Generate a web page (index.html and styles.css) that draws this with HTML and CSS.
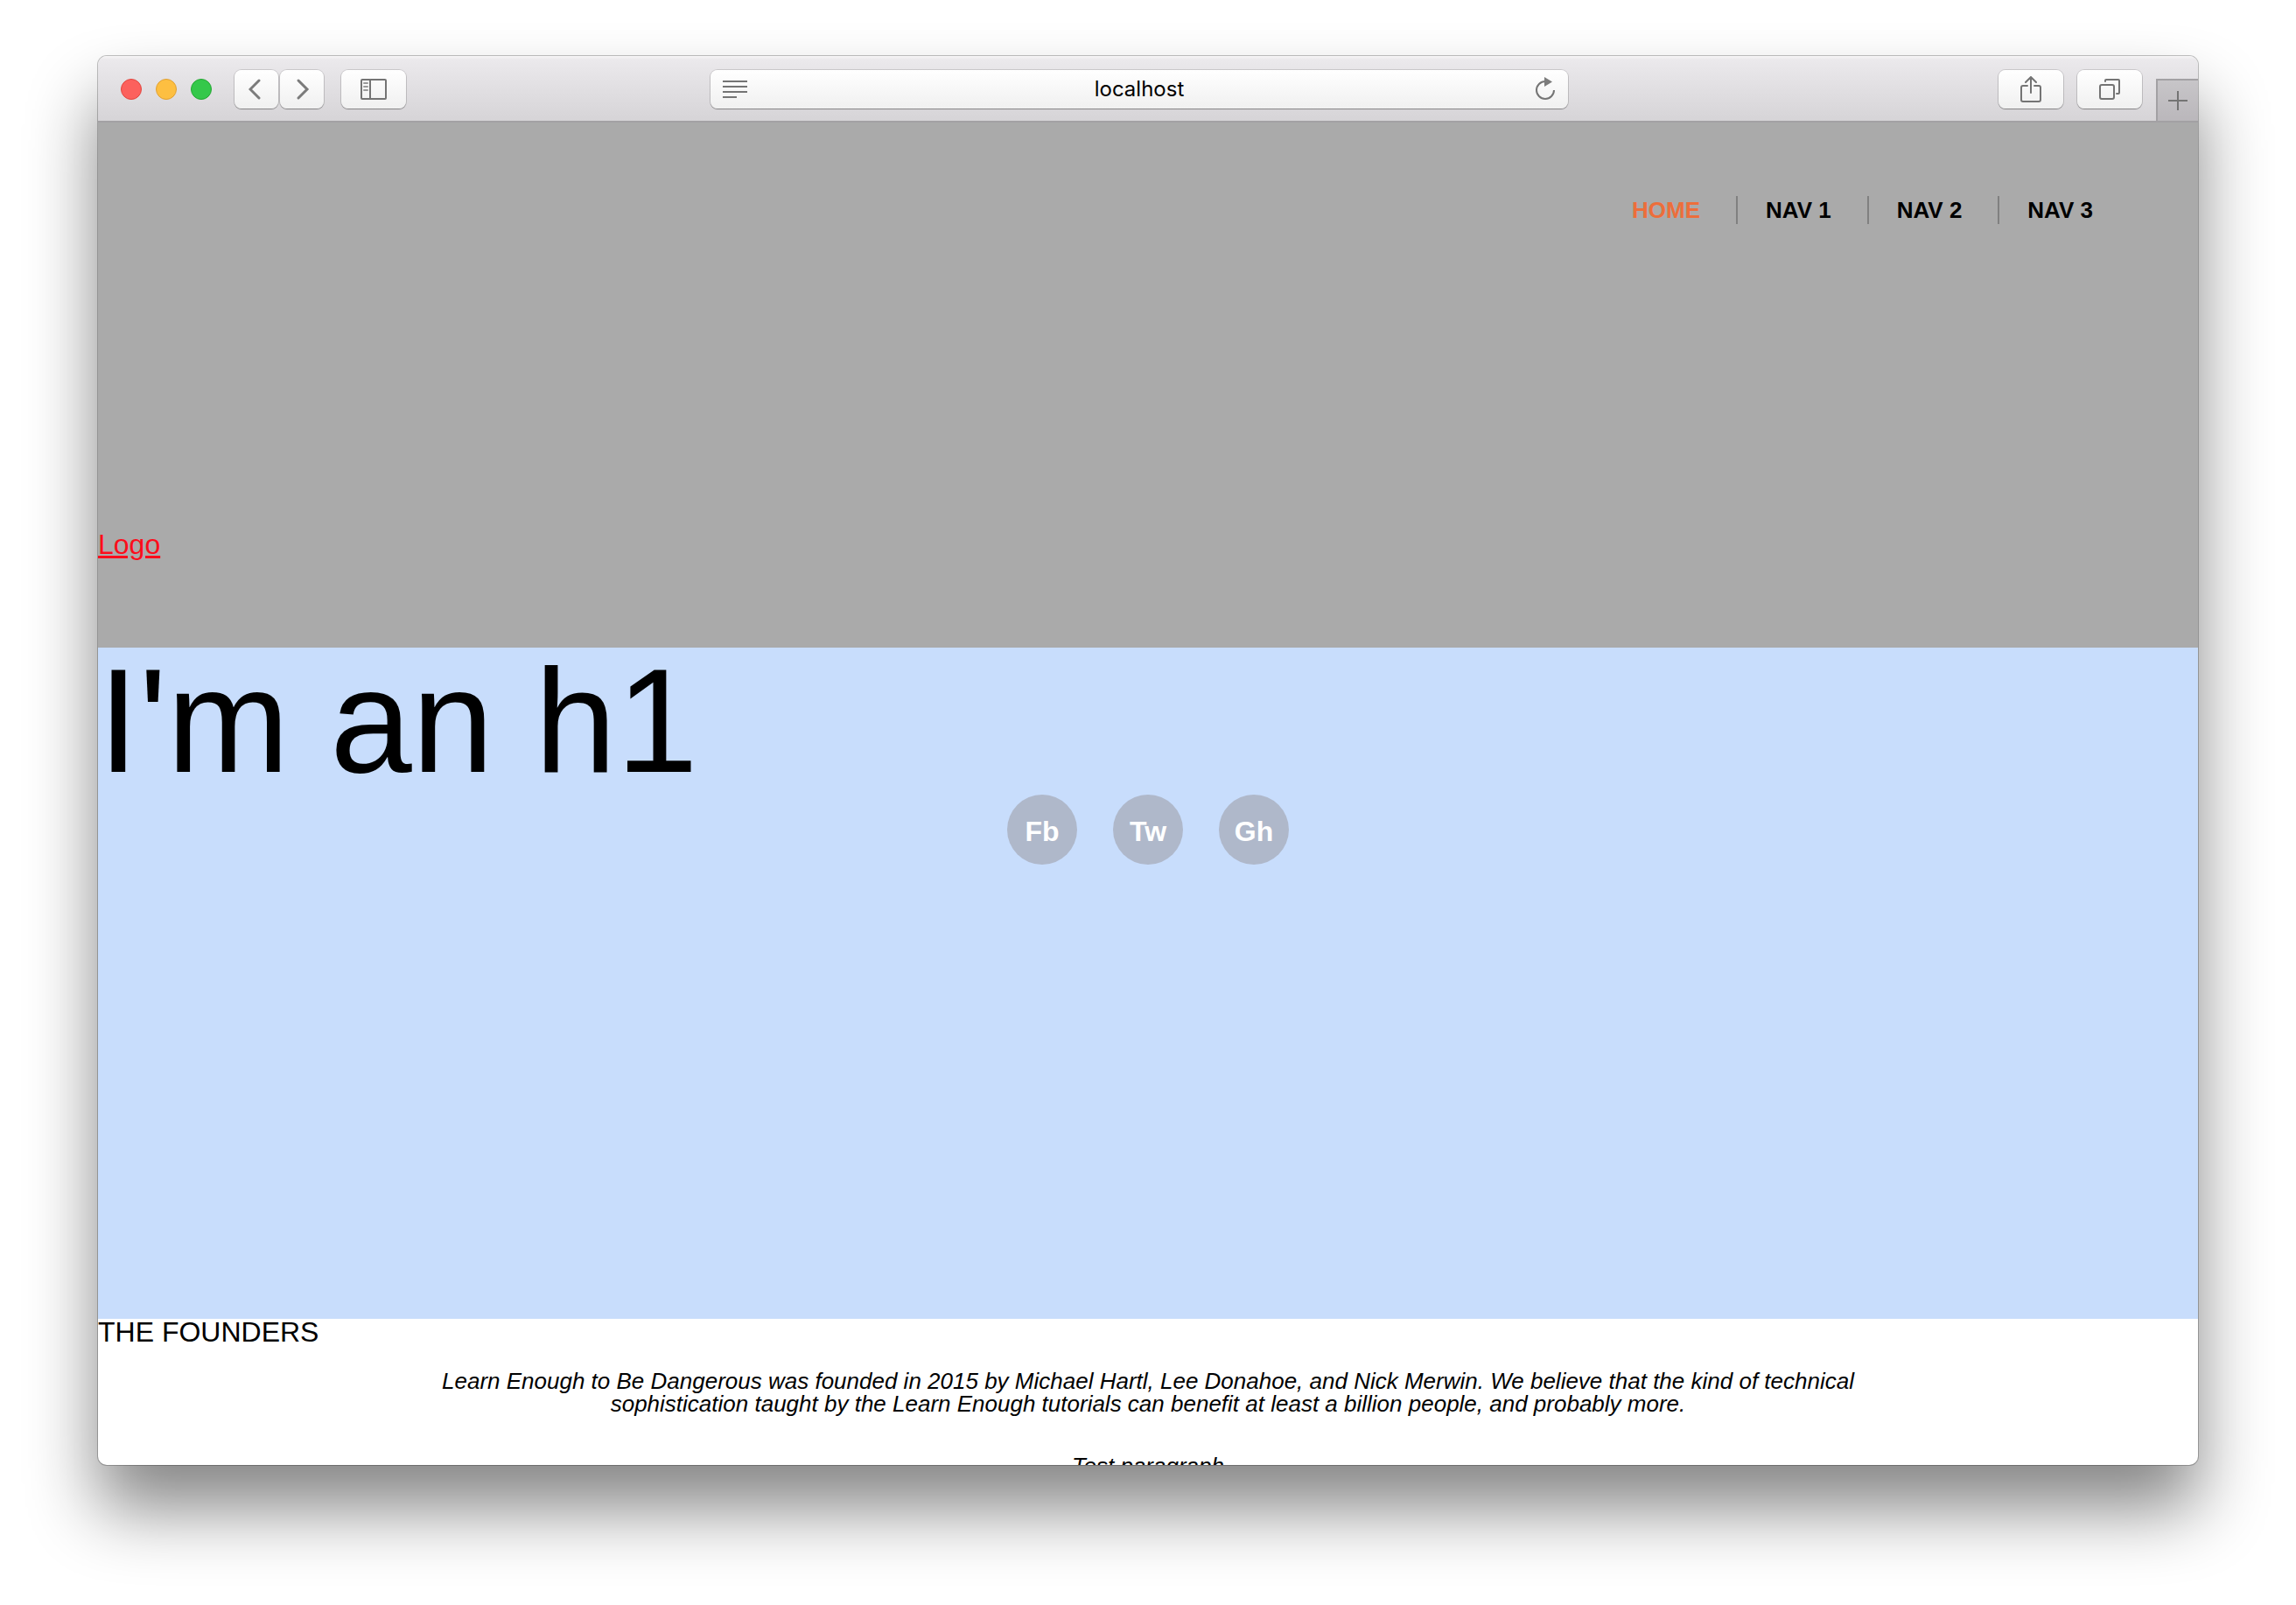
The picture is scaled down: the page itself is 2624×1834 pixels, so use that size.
FILE: index.html
```
<!DOCTYPE html>
<html lang="en">
<head>
<meta charset="utf-8">
<title>localhost</title>
<link rel="stylesheet" href="styles.css">
</head>
<body>
<div class="window">
  <div class="toolbar">
    <div class="lights">
      <button class="light light-close" aria-label="Close"></button>
      <button class="light light-minimize" aria-label="Minimize"></button>
      <button class="light light-zoom" aria-label="Zoom"></button>
    </div>
    <div class="history">
      <button class="tool tool-nav" aria-label="Back"><svg width="18" height="26" viewBox="0 0 18 26"><path d="M12 3 2 13l10 10"/></svg></button>
      <button class="tool tool-nav" aria-label="Forward"><svg width="18" height="26" viewBox="0 0 18 26"><path d="M5 3l10 10L5 23"/></svg></button>
    </div>
    <button class="tool" aria-label="Show sidebar"><svg class="thin" width="30" height="24" viewBox="0 0 30 24"><rect x="1" y="1" width="28" height="22" rx="1"/><path d="M11 1v22"/><path class="faint" d="M4 5h4M4 9h4M4 13h4"/></svg></button>
    <div class="address">
      <button class="field-icon" aria-label="Reader"><svg class="thin square" width="28" height="20" viewBox="0 0 28 20"><path d="M0 1h28M0 7h28M0 13h28M0 19h16"/></svg></button>
      <input class="url" type="text" value="localhost" aria-label="Address">
      <button class="field-icon" aria-label="Reload"><svg class="thin square" width="24" height="28" viewBox="0 0 24 28"><path d="M12 5a10 10 0 1 0 10 10"/><path class="solid" d="M11 0v11l9-5.500z"/></svg></button>
    </div>
    <div class="actions">
      <button class="tool" aria-label="Share"><svg class="thin" width="24" height="30" viewBox="0 0 24 30"><path d="M8 11H3q-2 0-2 2v14q0 2 2 2h18q2 0 2-2V13q0-2-2-2h-5M12 19V1M6 7l6-6 6 6"/></svg></button>
      <button class="tool" aria-label="Show all tabs"><svg class="thin" width="26" height="26" viewBox="0 0 26 26"><rect x="2" y="8" width="16" height="16" rx="2"/><path d="M8 4V3q0-1 1-1h14q1 0 1 1v14q0 1-1 1h-2"/></svg></button>
    </div>
    <button class="new-tab" aria-label="New tab"><svg class="thin square" width="22" height="22" viewBox="0 0 22 22"><path d="M11 0v22M0 11h22"/></svg></button>
  </div>
  <div class="page">
    <header class="header">
      <nav>
        <ul class="nav">
          <li><a class="current" href="#">Home</a></li>
          <li><a href="#">Nav 1</a></li>
          <li><a href="#">Nav 2</a></li>
          <li><a href="#">Nav 3</a></li>
        </ul>
      </nav>
      <a class="logo" href="#">Logo</a>
    </header>
    <section class="hero">
      <h1>I'm an h1</h1>
      <ul class="social">
        <li><a href="#">Fb</a></li>
        <li><a href="#">Tw</a></li>
        <li><a href="#">Gh</a></li>
      </ul>
    </section>
    <section class="founders">
      <h2>The Founders</h2>
      <p>Learn Enough to Be Dangerous was founded in 2015 by Michael Hartl, Lee Donahoe, and Nick Merwin. We believe that the kind of technical sophistication taught by the Learn Enough tutorials can benefit at least a billion people, and probably more.</p>
      <p>Test paragraph</p>
    </section>
  </div>
</div>
</body>
</html>
```
FILE: styles.css
```
* {
  box-sizing: border-box;
  margin: 0;
  padding: 0;
}

body {
  display: flex;
  height: 100vh;
  padding: 64px 112px 160px;
  background: #fff;
  color: #000;
  font-family: "Liberation Sans", Arial, sans-serif;
  font-size: 32px;
  line-height: 32px;
}

ul {
  list-style: none;
}

button {
  border: 0;
}

/* Browser window */
.window {
  display: flex;
  flex: 1;
  flex-direction: column;
  overflow: hidden;
  border-radius: 10px;
  background: #fff;
  box-shadow: 0 0 0 1px rgba(0, 0, 0, 0.24), 0 50px 80px rgba(0, 0, 0, 0.48);
}

.toolbar {
  display: flex;
  flex: none;
  align-items: center;
  height: 76px;
  padding: 2px 0 0 26px;
  border-bottom: 2px solid #a3a1a4;
  background: linear-gradient(#f6f5f6, #ebe9ec 4px, #d6d4d7);
}

.lights {
  display: flex;
  gap: 16px;
  margin-right: 26px;
}

.light {
  width: 24px;
  height: 24px;
  border: 1px solid;
  border-radius: 50%;
}

.light-close {
  border-color: #e2463f;
  background: #fc615d;
}

.light-minimize {
  border-color: #e0a033;
  background: #fdbf41;
}

.light-zoom {
  border-color: #24a732;
  background: #34c84a;
}

.history {
  display: flex;
  gap: 2px;
  margin-right: 20px;
}

.tool {
  display: flex;
  flex: none;
  align-items: center;
  justify-content: center;
  width: 74px;
  height: 44px;
}

.tool,
.address {
  border-radius: 8px;
  background: linear-gradient(#fff, #f0f0f0);
  box-shadow: 0 0 0 1px rgba(0, 0, 0, 0.13), 0 1px 1px rgba(0, 0, 0, 0.3);
}

.tool-nav {
  width: 50px;
}

svg {
  fill: none;
  stroke: #7b7b7b;
  stroke-width: 3;
  stroke-linecap: round;
}

.thin {
  stroke: #747474;
  stroke-width: 2;
}

.square {
  stroke-linecap: butt;
}

.faint {
  stroke: #9a9a9a;
}

.solid {
  fill: #7b7b7b;
  stroke: none;
}

.toolbar::before {
  content: "";
  flex: 348;
  order: 1;
}

.address {
  display: flex;
  flex: 980;
  order: 2;
  align-items: center;
  height: 44px;
}

.toolbar::after {
  content: "";
  flex: 492;
  order: 3;
}

.actions {
  display: flex;
  gap: 16px;
  order: 4;
  margin-right: 16px;
}

.field-icon {
  display: flex;
  align-items: center;
  justify-content: center;
  width: 28px;
  height: 44px;
  margin: 0 12px 0 14px;
  background: none;
}

.url {
  flex: 1;
  min-width: 0;
  height: 44px;
  border: 0;
  background: none;
  color: #000;
  font: 24px/44px Inter, sans-serif;
  text-align: center;
}

.new-tab {
  display: flex;
  order: 5;
  align-self: flex-end;
  align-items: center;
  justify-content: center;
  width: 48px;
  height: 48px;
  border-top: 2px solid #a3a1a4;
  border-left: 2px solid #a3a1a4;
  background: linear-gradient(#c7c5c8, #bab7bb);
}

/* Site */
.page {
  flex: 1;
  min-height: 0;
  overflow: hidden;
}

.header {
  display: flex;
  flex-direction: column;
  align-items: flex-start;
  justify-content: space-between;
  min-height: 600px;
  padding: 84px 0 102px;
  background: #aaa;
}

nav {
  align-self: flex-end;
  margin-right: 120px;
}

.nav {
  display: flex;
  font-size: 26px;
  font-weight: bold;
  text-transform: uppercase;
}

.nav li + li {
  margin-left: 41px;
  padding-left: 32px;
  border-left: 2px solid #808080;
}

.nav a {
  color: #000;
  text-decoration: none;
}

.nav .current {
  color: #ed6e3b;
}

.logo {
  color: #fc0d1b;
}

.hero {
  min-height: 767px;
  background: #c8ddfc;
}

h1 {
  font-size: 168px;
  font-weight: normal;
  line-height: 168px;
}

.social {
  display: flex;
  justify-content: center;
  gap: 41px;
}

.social a {
  display: block;
  width: 80px;
  height: 80px;
  border-radius: 50%;
  background: #afb8ca;
  color: #fff;
  font-weight: bold;
  line-height: 84px;
  text-align: center;
  text-decoration: none;
}

h2 {
  margin-bottom: 28px;
  font-size: 32px;
  font-weight: normal;
  line-height: 30px;
  text-transform: uppercase;
}

.founders p {
  width: 70%;
  margin: 0 auto 45px;
  font-size: 26px;
  font-style: italic;
  line-height: 26px;
  text-align: center;
}
```
